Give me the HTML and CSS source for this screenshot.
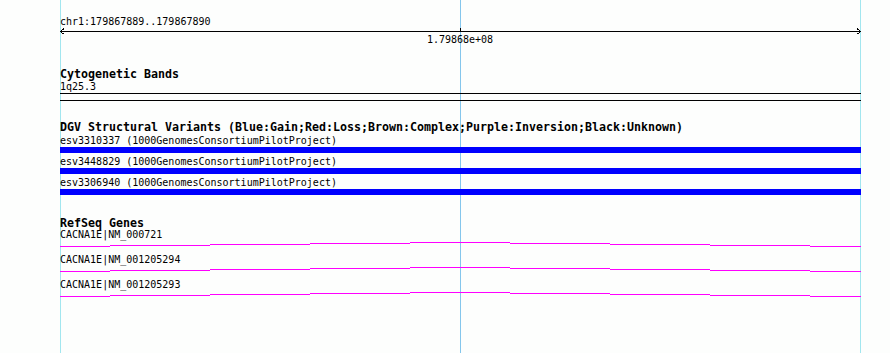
FILE: index.html
```html
<!DOCTYPE html>
<html lang="en">
<head>
    <meta charset="UTF-8">
    <meta name="viewport" content="width=device-width, initial-scale=1.0">
    <title>chr1:179867889..179867890</title>
    <link rel="stylesheet" href="styles.css">
</head>
<body>
    <div class="view">
        <div class="grid grid-start"></div>
        <div class="grid grid-center"></div>
        <div class="grid grid-end"></div>

        <div class="tracks">
            <!-- ruler -->
            <div class="ruler">
                <div class="ruler-name">chr1:179867889..179867890</div>
                <svg class="ruler-scale" width="801" height="6" viewBox="0 0 801 6">
                    <path d="M0 3.5H801M400.5 0V3.5" />
                    <path d="M4 0.5L0.5 3.5L4 6.5M797 0.5L800.5 3.5L797 6.5" />
                </svg>
                <div class="ruler-tick">1.79868e+08</div>
            </div>

            <div class="track track-bands">
                <div class="track-title">Cytogenetic Bands</div>
                <div class="feature-label tall">1q25.3</div>
                <div class="band"></div>
            </div>

            <div class="track track-dgv">
                <div class="track-title">DGV Structural Variants (Blue:Gain;Red:Loss;Brown:Complex;Purple:Inversion;Black:Unknown)</div>
                <div class="variant">
                    <div class="feature-label">esv3310337 (1000GenomesConsortiumPilotProject)</div>
                    <div class="variant-bar"></div>
                </div>
                <div class="variant">
                    <div class="feature-label">esv3448829 (1000GenomesConsortiumPilotProject)</div>
                    <div class="variant-bar"></div>
                </div>
                <div class="variant">
                    <div class="feature-label">esv3306940 (1000GenomesConsortiumPilotProject)</div>
                    <div class="variant-bar"></div>
                </div>
            </div>

            <div class="track track-genes">
                <div class="track-title">RefSeq Genes</div>
                <div class="gene">
                    <div class="feature-label">CACNA1E|NM_000721</div>
                    <svg class="gene-line" width="801" height="6" viewBox="0 0 801 6">
                        <path d="M0 5.5H50M50 4.5H150M150 3.5H250M250 2.5H350M350 1.5H450M450 2.5H550M550 3.5H650M650 4.5H750M750 5.5H801" />
                    </svg>
                </div>
                <div class="gene">
                    <div class="feature-label">CACNA1E|NM_001205294</div>
                    <svg class="gene-line" width="801" height="6" viewBox="0 0 801 6">
                        <path d="M0 5.5H50M50 4.5H150M150 3.5H250M250 2.5H350M350 1.5H450M450 2.5H550M550 3.5H650M650 4.5H750M750 5.5H801" />
                    </svg>
                </div>
                <div class="gene">
                    <div class="feature-label">CACNA1E|NM_001205293</div>
                    <svg class="gene-line" width="801" height="6" viewBox="0 0 801 6">
                        <path d="M0 5.5H50M50 4.5H150M150 3.5H250M250 2.5H350M350 1.5H450M450 2.5H550M550 3.5H650M650 4.5H750M750 5.5H801" />
                    </svg>
                </div>
            </div>
        </div>
    </div>
</body>
</html>
```

FILE: styles.css
```css
body {
    margin: 0;
    background-color: #fdfefd;
    color: #000;
    font-family: "DejaVu Sans Mono", monospace;
    font-size: 10px;
}
.view {
    position: relative;
    height: 353px;
    overflow: hidden;
    padding: 15px 0 0 60px;
    box-sizing: border-box;
}
.grid {
    position: absolute;
    top: 0;
    bottom: 0;
    width: 1px;
    background-color: #a2e6ef;
}
.grid-start {
    left: 60px;
}
.grid-center {
    left: 460px;
    background-color: #84c6ec;
}
.grid-end {
    left: 860px;
}
.tracks {
    position: relative;
    width: 801px;
}
.ruler-name {
    line-height: 13px;
}
.ruler-scale {
    display: block;
    fill: none;
    stroke: #000;
    stroke-width: 1;
    shape-rendering: crispEdges;
}
.ruler-tick {
    width: 800px;
    line-height: 12px;
    text-align: center;
}
.track-title {
    font-weight: bold;
    font-size: 11.63px;
    line-height: 12px;
    white-space: nowrap;
}
.feature-label {
    line-height: 12px;
    white-space: nowrap;
}
.feature-label.tall {
    line-height: 13px;
}
.track-bands {
    margin-top: 22px;
}
.band {
    height: 6px;
    border-top: 1px solid #000;
    border-bottom: 1px solid #000;
}
.track-dgv {
    margin-top: 20px;
}
.variant {
    margin-top: 2px;
}
.variant + .variant {
    margin-top: 3px;
}
.variant-bar {
    height: 6px;
    background-color: #0000ff;
}
.track-genes {
    margin-top: 22px;
}
.gene + .gene {
    margin-top: 7px;
}
.gene-line {
    display: block;
    fill: none;
    stroke: #ff00ff;
    stroke-width: 1;
    shape-rendering: crispEdges;
}
```
